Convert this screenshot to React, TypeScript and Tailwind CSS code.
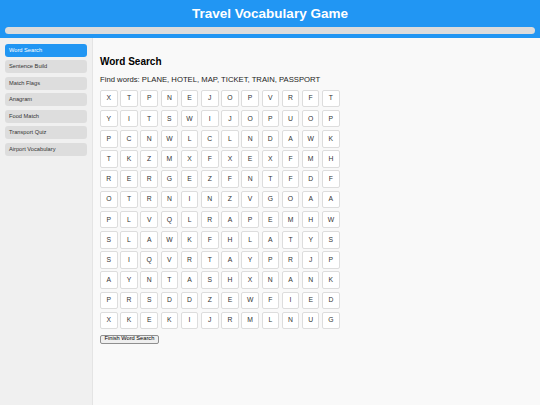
import React from "react";

const games = [
  "Word Search",
  "Sentence Build",
  "Match Flags",
  "Anagram",
  "Food Match",
  "Transport Quiz",
  "Airport Vocabulary",
];

const grid = [
  "XTPNEJOPVRFT",
  "YITSWIJOPUOP",
  "PCNWLCLNDAWK",
  "TKZMXFXEXFMH",
  "RERGEZFNTFDF",
  "OTRNINZVGOAA",
  "PLVQLRAPEMHW",
  "SLAWKFHLATYS",
  "SIQVRTAYPRJP",
  "AYNTASHXNANK",
  "PRSDDZEWFIED",
  "XKEKIJRMLNUG",
];

export default function App() {
  return (
    <div className="w-[540px] h-[405px] flex flex-col overflow-hidden font-['Liberation_Sans',Arial,sans-serif] text-[#222]">
      <header className="bg-[#2196f3] h-[37.5px] px-[5px] pt-[6px] flex flex-col items-center">
        <h1 className="text-white font-bold text-[13.5px] leading-[16px]">
          Travel Vocabulary Game
        </h1>
        <div className="mt-[4.5px] w-full h-[7px] rounded-full bg-[#dcdcdc]" />
      </header>
      <div className="flex flex-1 min-h-0">
        <aside className="w-[93px] shrink-0 bg-[#f0f0f0] border-r border-[#e4e4e4] px-[5px] pt-[6px] flex flex-col gap-[3.5px]">
          {games.map((g, i) => (
            <div
              key={g}
              className={
                "h-[13px] rounded-[3px] px-[4px] flex items-center text-[5.7px] " +
                (i === 0 ? "bg-[#2196f3] text-white" : "bg-[#dddddd] text-[#333]")
              }
            >
              {g}
            </div>
          ))}
        </aside>
        <main className="flex-1 bg-[#f9f9f9] pl-[7px] pt-[18px]">
          <h2 className="font-bold text-[10px] leading-[12px] text-black">Word Search</h2>
          <p className="mt-[7.5px] text-[7.7px] leading-[9px] text-[#222]">
            Find words: PLANE, HOTEL, MAP, TICKET, TRAIN, PASSPORT
          </p>
          <div className="mt-[5.7px] grid grid-cols-[repeat(12,17.6px)] gap-[2.6px]">
            {grid.flatMap((row, r) =>
              row.split("").map((ch, c) => (
                <div
                  key={r + "-" + c}
                  className="h-[17.6px] bg-white border border-[#dddddd] rounded-[2px] flex items-center justify-center text-[6.8px] text-[#333]"
                >
                  {ch}
                </div>
              ))
            )}
          </div>
          <button className="mt-[5.5px] h-[9px] px-[3.5px] bg-[#efefef] border border-[#8f8f8f] rounded-[2px] text-[5.7px] leading-none text-black flex items-center">
            Finish Word Search
          </button>
        </main>
      </div>
    </div>
  );
}
